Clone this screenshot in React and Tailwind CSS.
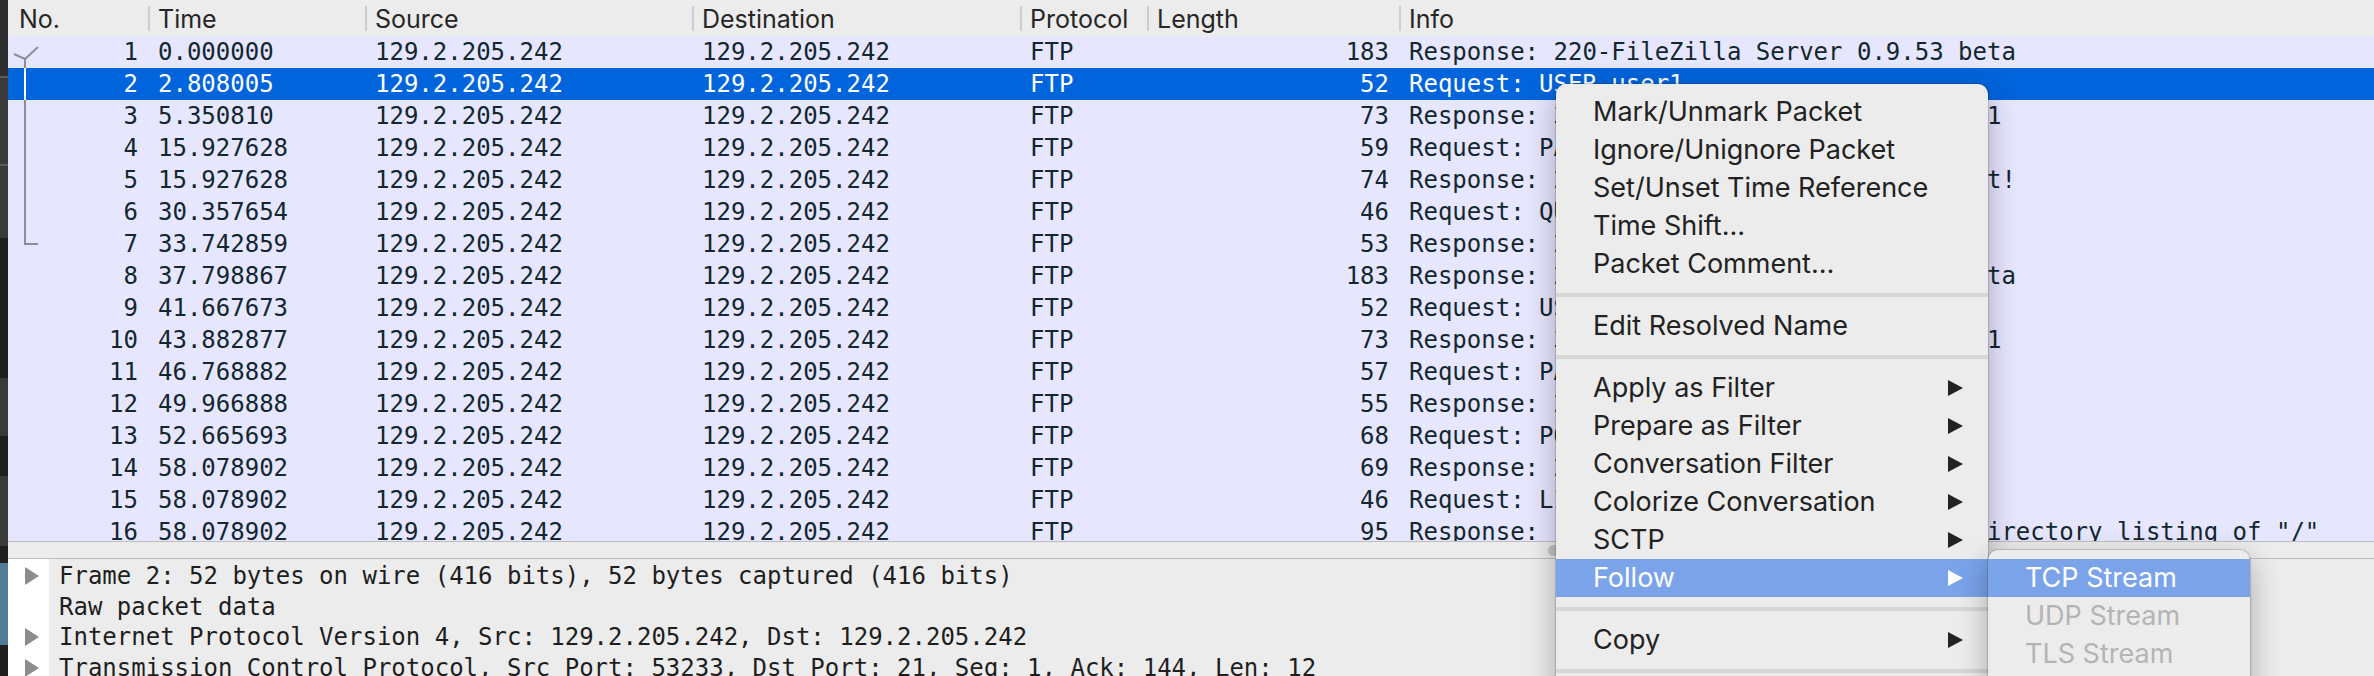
import React from "react";

const MONO = "font-['DejaVu_Sans_Mono','Liberation_Mono',monospace]";
const SANS = "font-['Inter','Liberation_Sans',sans-serif]";

const packets = [
  [1, "0.000000", 183, "Response: 220-FileZilla Server 0.9.53 beta"],
  [2, "2.808005", 52, "Request: USER user1"],
  [3, "5.350810", 73, "Response: 331 Password required for user1"],
  [4, "15.927628", 59, "Request: PASS userpassword"],
  [5, "15.927628", 74, "Response: 230 Logged on - welcome to test!"],
  [6, "30.357654", 46, "Request: QUIT"],
  [7, "33.742859", 53, "Response: 221 Goodbye"],
  [8, "37.798867", 183, "Response: 220-FileZilla Server 0.9.53 beta"],
  [9, "41.667673", 52, "Request: USER user1"],
  [10, "43.882877", 73, "Response: 331 Password required for user1"],
  [11, "46.768882", 57, "Request: PASS mypassword"],
  [12, "49.966888", 55, "Response: 230 Logged on"],
  [13, "52.665693", 68, "Request: PORT 129,2,205,242,207,221"],
  [14, "58.078902", 69, "Response: 200 Port command successful"],
  [15, "58.078902", 46, "Request: LIST"],
  [16, "58.078902", 95, 'Response: 150 Opening data channel for directory listing of "/"'],
];

const details = [
  { arrow: true, text: "Frame 2: 52 bytes on wire (416 bits), 52 bytes captured (416 bits)" },
  { arrow: false, text: "Raw packet data" },
  { arrow: true, text: "Internet Protocol Version 4, Src: 129.2.205.242, Dst: 129.2.205.242" },
  {
    arrow: true,
    text: "Transmission Control Protocol, Src Port: 53233, Dst Port: 21, Seq: 1, Ack: 144, Len: 12",
  },
];

const menu = [
  { label: "Mark/Unmark Packet" },
  { label: "Ignore/Unignore Packet" },
  { label: "Set/Unset Time Reference" },
  { label: "Time Shift…" },
  { label: "Packet Comment…" },
  { sep: true },
  { label: "Edit Resolved Name" },
  { sep: true },
  { label: "Apply as Filter", arrow: true },
  { label: "Prepare as Filter", arrow: true },
  { label: "Conversation Filter", arrow: true },
  { label: "Colorize Conversation", arrow: true },
  { label: "SCTP", arrow: true },
  { label: "Follow", arrow: true, active: true },
  { sep: true },
  { label: "Copy", arrow: true },
  { sep: true },
  { label: "Protocol Preferences", arrow: true },
  { label: "Decode As…" },
];

const followMenu = [
  { label: "TCP Stream", active: true },
  { label: "UDP Stream", disabled: true },
  { label: "TLS Stream", disabled: true },
  { label: "HTTP Stream", disabled: true },
];

function Arrow() {
  return (
    <svg width="15" height="16" viewBox="0 0 15 16">
      <polygon points="0,0 15,8 0,16" fill="currentColor" />
    </svg>
  );
}

function MenuItem({ item }) {
  if (item.sep) return <div className="my-[10px] h-[4px] bg-[#d6d6d6]" />;
  const tone = item.active
    ? "bg-[#7aa3ea] text-white"
    : item.disabled
    ? "text-[#b4b4b4]"
    : "text-[#222222]";
  return (
    <div className={`flex h-[38px] items-center justify-between pl-[37px] pr-[25px] whitespace-nowrap ${tone}`}>
      <span>{item.label}</span>
      {item.arrow && <Arrow />}
    </div>
  );
}

function HeaderCell({ label, width, first }) {
  return (
    <div className={`flex h-full shrink-0 items-center ${width}`}>
      {!first && <span className="h-[25px] w-[2px] bg-[#cdcdcd]" />}
      <span className={`pt-[4px] ${first ? "pl-[11px]" : "pl-[8px]"}`}>{label}</span>
    </div>
  );
}

function PacketRow({ p, selected }) {
  const [no, time, len, info] = p;
  const tone = selected ? "bg-[#0064dc] text-white" : "bg-[#e7e6ff] text-[#12272e]";
  return (
    <div className={`flex h-[32px] shrink-0 items-center whitespace-pre ${tone}`}>
      <div className="w-[140px] shrink-0 pr-[10px] text-right">{no}</div>
      <div className="w-[217px] shrink-0 pl-[10px]">{time}</div>
      <div className="w-[327px] shrink-0 pl-[10px]">129.2.205.242</div>
      <div className="w-[328px] shrink-0 pl-[10px]">129.2.205.242</div>
      <div className="w-[127px] shrink-0 pl-[10px]">FTP</div>
      <div className="w-[252px] shrink-0 pr-[10px] text-right">{len}</div>
      <div className="flex-1 pl-[10px]">{info}</div>
    </div>
  );
}

export default function App() {
  return (
    <div className="relative flex h-[676px] w-[2374px] overflow-hidden bg-[#ececec]">
      {/* edge of the window behind */}
      <div className="flex w-[8px] shrink-0 flex-col">
        <div className="h-[76px] bg-[#2e2e2e]" />
        <div className="h-[2px] bg-[#5a5a5a]" />
        <div className="h-[86px] bg-[#3a3a3a]" />
        <div className="h-[2px] bg-[#5a5a5a]" />
        <div className="h-[72px] bg-[#3a3a3a]" />
        <div className="h-[140px] bg-[#1f1f1f]" />
        <div className="h-[58px] bg-[#3a3a3a]" />
        <div className="h-[40px] bg-[#1f1f1f]" />
        <div className="h-[70px] bg-[#3a3a3a]" />
        <div className="h-[17px] bg-[#1f1f1f]" />
        <div className="h-[82px] bg-[#4f7d98]" />
        <div className="flex-1 bg-[#1f1f1f]" />
      </div>

      <div className="flex min-w-0 flex-1 flex-col">
        <div className="h-[2px] bg-[#a3a3a3]" />
        <div className={`flex h-[36px] shrink-0 items-center bg-[#ececec] text-[25px] text-[#262626] ${SANS}`}>
          <HeaderCell first label="No." width="w-[140px]" />
          <HeaderCell label="Time" width="w-[217px]" />
          <HeaderCell label="Source" width="w-[327px]" />
          <HeaderCell label="Destination" width="w-[328px]" />
          <HeaderCell label="Protocol" width="w-[127px]" />
          <HeaderCell label="Length" width="w-[252px]" />
          <HeaderCell label="Info" width="flex-1" />
        </div>

        <div className={`relative flex h-[505px] shrink-0 flex-col overflow-hidden bg-[#e7e6ff] text-[24px] leading-[32px] ${MONO}`}>
          {packets.map((p) => (
            <PacketRow key={p[0]} p={p} selected={p[0] === 2} />
          ))}
          {/* related packets indicator */}
          <svg className="absolute left-0 top-0" width="40" height="220" viewBox="0 0 40 220">
            <polyline points="6,18 17,23 30,11" fill="none" stroke="#8a8e96" strokeWidth="2" />
            <polyline points="17,23 17,208 30,208" fill="none" stroke="#8a8e96" strokeWidth="2" />
            <line x1="17" y1="32" x2="17" y2="64" stroke="#ffffff" strokeWidth="2" />
          </svg>
        </div>

        <div className="relative h-[18px] shrink-0 border-y border-[#bdbdbd] bg-[#ececec]">
          <div className="absolute left-[1540px] top-[3px] h-[11px] w-[60px] rounded-full bg-[#c4c4c4]" />
        </div>

        <div className={`flex flex-1 text-[24px] text-[#1e1e1e] ${MONO}`}>
          <div className="flex w-[41px] shrink-0 flex-col bg-white pt-[2px] text-[#8c8c8c]">
            {details.map((d, i) => (
              <div key={i} className="flex h-[30.5px] items-center pl-[17px]">
                {d.arrow && (
                  <svg width="14" height="18" viewBox="0 0 14 18">
                    <polygon points="0,0 14,9 0,18" fill="currentColor" />
                  </svg>
                )}
              </div>
            ))}
          </div>
          <div className="flex flex-1 flex-col pt-[2px]">
            {details.map((d, i) => (
              <div key={i} className="flex h-[30.5px] items-center whitespace-pre pl-[10px]">
                {d.text}
              </div>
            ))}
          </div>
        </div>
      </div>

      {/* context menu */}
      <div
        className={`absolute left-[1556px] top-[84px] w-[432px] rounded-[10px] bg-[#ececec] pt-[9px] text-[27px] shadow-[0_10px_30px_rgba(0,0,0,0.3)] ring-1 ring-black/15 ${SANS}`}
      >
        {menu.map((item, i) => (
          <MenuItem key={i} item={item} />
        ))}
      </div>

      <div
        className={`absolute left-[1988px] top-[550px] w-[262px] rounded-[10px] bg-[#ececec] pt-[9px] text-[27px] shadow-[0_10px_30px_rgba(0,0,0,0.3)] ring-1 ring-black/15 ${SANS}`}
      >
        {followMenu.map((item, i) => (
          <MenuItem key={i} item={item} />
        ))}
      </div>
    </div>
  );
}
